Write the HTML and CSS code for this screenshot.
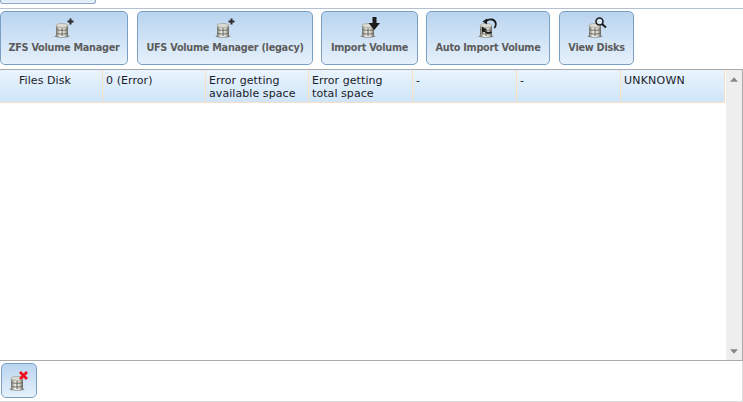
FILE: index.html
```html
<!DOCTYPE html>
<html lang="en">
<head>
<meta charset="utf-8">
<title>Volumes</title>
<link rel="stylesheet" href="styles.css">
</head>
<body>
<svg class="defs" width="0" height="0" aria-hidden="true">
  <defs>
    <linearGradient id="dk" x1="0" x2="1" y1="0" y2="0">
      <stop offset="0" stop-color="#77776f"/><stop offset=".35" stop-color="#eeeee6"/><stop offset=".7" stop-color="#d8d8d0"/><stop offset="1" stop-color="#66665f"/>
    </linearGradient>
    <symbol id="disks" viewBox="0 0 20 20">
      <ellipse cx="9" cy="17.3" rx="7.500" ry="1.500" fill="#55554f" opacity=".7"/>
      <path d="M3 6.500v10c0 1 2.600 1.700 6 1.700s6-.7 6-1.700v-10z" fill="url(#dk)"/>
      <ellipse cx="9" cy="6.500" rx="6" ry="2" fill="#dcdcd4" stroke="#88887f" stroke-width=".5"/>
      <path d="M3 10.300c1 1.300 10.800 1.300 12 0M3 14c1 1.300 10.800 1.300 12 0" fill="none" stroke="#66665f" stroke-width=".9"/>
      <path d="M9 9v8" stroke="#66665f" stroke-width="1"/>
    </symbol>
  </defs>
</svg>
<div class="tab"></div>
<div class="toolbar">
  <button class="btn btn-zfs">
    <svg class="ico" viewBox="0 0 24 22"><use href="#disks" x="1" y="2" width="20" height="20"/><path d="M15.500 3.500h2V1.500h2v2h2v2h-2v2h-2v-2h-2z" fill="#2a2a2a"/></svg>
    <span>ZFS Volume Manager</span>
  </button>
  <button class="btn btn-ufs">
    <svg class="ico" viewBox="0 0 24 22"><use href="#disks" x="1" y="2" width="20" height="20"/><path d="M15.500 3.500h2V1.500h2v2h2v2h-2v2h-2v-2h-2z" fill="#2a2a2a"/></svg>
    <span>UFS Volume Manager (legacy)</span>
  </button>
  <button class="btn btn-imp">
    <svg class="ico" viewBox="0 0 24 22"><use href="#disks" x="1" y="2" width="20" height="20"/><path d="M14.500 0h4v6h3.500l-5.700 7-5.800-7h4z" fill="#1c1c1c"/></svg>
    <span>Import Volume</span>
  </button>
  <button class="btn btn-auto">
    <svg class="ico" viewBox="0 0 24 22"><use href="#disks" x="1" y="2" width="20" height="20"/><path d="M10 4.500C13 1 19 2 19.800 6.500c.3 2-.5 3.500-1.500 4.500" fill="none" stroke="#1c1c1c" stroke-width="1.800"/><path d="M6.500 4.500l4.500-3v6z" fill="#1c1c1c"/><path d="M15.500 15c-3 1.500-6.500 1-8-2.500" fill="none" stroke="#1c1c1c" stroke-width="1.800"/><path d="M6 16V9.500l4.500 3z" fill="#1c1c1c"/></svg>
    <span>Auto Import Volume</span>
  </button>
  <button class="btn btn-view">
    <svg class="ico" viewBox="0 0 24 22"><use href="#disks" x="1" y="2" width="20" height="20"/><circle cx="14.500" cy="4.500" r="3.500" fill="#fff" fill-opacity=".35" stroke="#1c1c1c" stroke-width="1.600"/><path d="M17 7l4 3.500" stroke="#1c1c1c" stroke-width="2"/></svg>
    <span>View Disks</span>
  </button>
</div>
<div class="grid">
  <div class="body">
    <div class="row">
      <div class="cell c1">Files Disk</div>
      <div class="cell c2">0 (Error)</div>
      <div class="cell c2">Error getting available space</div>
      <div class="cell c3">Error getting total space</div>
      <div class="cell c3">-</div>
      <div class="cell c3">-</div>
      <div class="cell c3 status">UNKNOWN</div>
    </div>
  </div>
  <div class="scroll">
    <svg class="arrow" viewBox="0 0 9 5"><path d="M4.500 0L9 5H0z" fill="#888"/></svg>
    <svg class="arrow" viewBox="0 0 9 5"><path d="M0 0h9L4.500 5z" fill="#888"/></svg>
  </div>
</div>
<div class="footer">
  <button class="btn btn-del">
    <svg class="ico" viewBox="0 0 24 22"><use href="#disks" x="1" y="2" width="20" height="20"/><path d="M12 3l2-2 2.500 2.500L19 1l2 2-2.500 2.500L21 8l-2 2-2.500-2.500L14 10l-2-2 2.500-2.500z" fill="#f00d1c"/></svg>
  </button>
</div>
</body>
</html>
```
FILE: styles.css
```css
* { box-sizing: border-box; }
html, body { margin: 0; padding: 0; }
body {
  width: 743px;
  height: 402px;
  overflow: hidden;
  background: #fff;
  font-family: "DejaVu Sans", Verdana, sans-serif;
  font-size: 11px;
  color: #222;
}
.defs { position: absolute; }
.tab {
  width: 96px;
  height: 4px;
  border: 1px solid #8aa8c8;
  border-top: 0;
  border-radius: 0 0 3px 3px;
  background: linear-gradient(#dcebf9, #e8f2fb);
}
.toolbar {
  display: flex;
  align-items: flex-start;
  height: 61px;
  margin-top: 4px;
  padding-top: 2px;
  border-top: 1px solid #b4c0d0;
}
.btn {
  display: flex;
  flex-direction: column;
  align-items: center;
  padding: 0;
  border: 1px solid #7a9fc4;
  border-radius: 5px;
  background: linear-gradient(#b9d4ef, #e6f1fb);
  color: #5c5c5c;
  font-family: inherit;
  font-size: 9.7px;
  font-weight: bold;
  letter-spacing: -.26px;
  line-height: 12px;
}
.toolbar .btn { height: 54px; padding-top: 5px; }
.btn .ico { display: block; width: 24px; height: 22px; margin-bottom: 3px; }
.btn-zfs { width: 128px; margin-right: 9px; }
.btn-ufs { width: 176px; margin-right: 8px; }
.btn-imp { width: 97px; margin-right: 8px; }
.btn-auto { width: 124px; margin-right: 9px; }
.btn-view { width: 75px; }
.grid {
  display: flex;
  height: 292px;
  border: 1px solid #aaa;
  border-left: 0;
}
.body { flex: 1; min-width: 0; }
.row {
  display: flex;
  width: 725px;
  height: 33px;
  border-bottom: 1px solid #fadfc4;
  background: linear-gradient(#eaf4fe, #cfe5f9);
}
.cell {
  padding: 4px 3px 0;
  border-right: 1px solid #fadfc4;
  color: #1c1c2a;
  line-height: 13px;
  letter-spacing: .07px;
}
.c1 { flex: 0 0 103px; padding-left: 19px; }
.c2 { flex: 0 0 103px; }
.c3 { flex: 0 0 104px; }
.status { letter-spacing: .2px; }
.scroll {
  display: flex;
  flex-direction: column;
  justify-content: space-between;
  align-items: center;
  flex: 0 0 16px;
  padding: 7px 0 6px;
  background: #eeeeee;
}
.arrow { display: block; width: 8px; height: 5px; }
.footer {
  height: 41px;
  padding: 2px 0 0 1px;
  border-bottom: 1px solid #ddd;
  border-right: 1px solid #ddd;
}
.btn-del { width: 36px; height: 35px; padding-top: 6px; }
.btn-del .ico { margin: 0; }
```
